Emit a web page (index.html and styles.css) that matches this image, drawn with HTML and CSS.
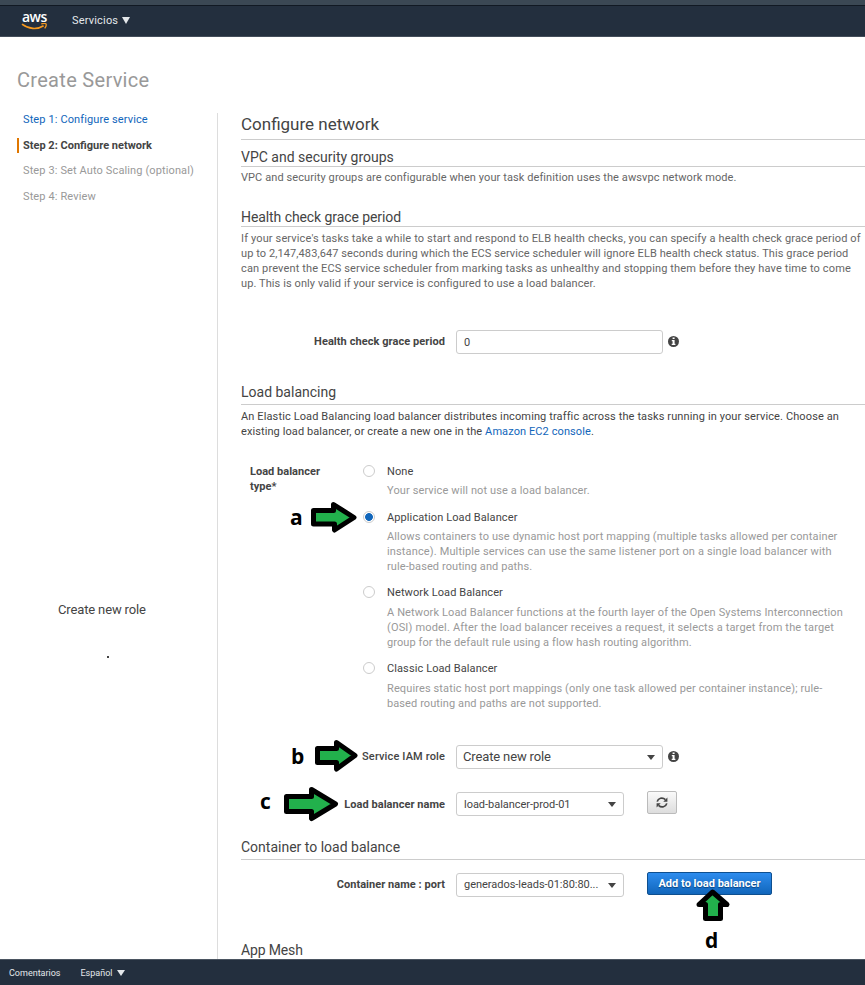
FILE: index.html
```html
<!DOCTYPE html>
<html lang="es">
<head>
<meta charset="utf-8">
<title>Create Service</title>
<link rel="stylesheet" href="styles.css">
</head>
<body>
<header class="topbar">
  <div class="logo">
    <span class="logo-text">aws</span>
    <svg class="logo-smile" width="28" height="8" viewBox="0 0 28 8"><path d="M1 1.200C7.500 6.200 16 7 22.600 2.800" fill="none" stroke="#f79a1f" stroke-width="1.700"/><path d="M20.200.9C22.400.4 24.400.3 25 .9 25.500 1.800 24.700 4 23.700 5.300" fill="none" stroke="#f79a1f" stroke-width="1.300"/></svg>
  </div>
  <a class="nav-item">Servicios <i class="tri"></i></a>
</header>

<div class="page">
  <aside class="sidebar">
    <h1>Create Service</h1>
    <ol class="steps">
      <li class="done">Step 1: Configure service</li>
      <li class="current">Step 2: Configure network</li>
      <li>Step 3: Set Auto Scaling (optional)</li>
      <li>Step 4: Review</li>
    </ol>
    <div class="side-note">Create new role</div>
    <div class="side-dot"></div>
  </aside>

  <main class="content">
    <h2>Configure network</h2>

    <section class="vpc">
      <h3>VPC and security groups</h3>
      <p class="muted narrow">VPC and security groups are configurable when your task definition uses the awsvpc network mode.</p>
    </section>

    <section class="health">
      <h3 class="tight">Health check grace period</h3>
      <p class="muted"><span class="wide">If your service's tasks take a while to start and respond to ELB health checks, you can specify a health check grace period of</span><br><span class="narrow">up to 2,147,483,647 seconds during which the ECS service scheduler will ignore ELB health check status. This grace period</span><br><span class="wide">can prevent the ECS service scheduler from marking tasks as unhealthy and stopping them before they have time to come</span><br><span class="narrow">up. This is only valid if your service is configured to use a load balancer.</span></p>
      <div class="row">
        <label class="grace">Health check grace period</label>
        <div class="field long">0</div>
        <svg class="info" width="11" height="11" viewBox="0 0 11 11"><circle cx="5.500" cy="5.500" r="5.500" fill="#444"/><path d="M4.600 1.500h2v1.600h-2zM3.800 4h2.800v3.800h.8V9H3.700V7.800h.9V5.200h-.8z" fill="#fff"/></svg>
      </div>
    </section>

    <section class="balancing">
      <h3 class="tall">Load balancing</h3>
      <p>An Elastic Load Balancing load balancer distributes incoming traffic across the tasks running in your service. Choose an<br><span class="narrow">existing load balancer, or create a new one in the <a>Amazon EC2 console</a>.</span></p>
      <div class="types">
        <label class="types-label">Load balancer<br>type*</label>
        <div class="options">
          <div class="option"><i class="radio"></i><div><b>None</b><p>Your service will not use a load balancer.</p></div></div>
          <div class="option"><i class="radio on"></i><div><b>Application Load Balancer</b><p>Allows containers to use dynamic host port mapping (multiple tasks allowed per container<br><span class="wide">instance). Multiple services can use the same listener port on a single load balancer with</span><br><span class="narrow">rule-based routing and paths.</span></p></div></div>
          <div class="option"><i class="radio"></i><div><b>Network Load Balancer</b><p><span>A Network Load Balancer functions at the fourth layer of the Open Systems Interconnection</span><br><span class="wider">(OSI) model. After the load balancer receives a request, it selects a target from the target</span><br><span class="narrow">group for the default rule using a flow hash routing algorithm.</span></p></div></div>
          <div class="option"><i class="radio"></i><div><b>Classic Load Balancer</b><p><span>Requires static host port mappings (only one task allowed per container instance); rule-</span><br><span class="narrow">based routing and paths are not supported.</span></p></div></div>
        </div>
      </div>
      <div class="row role">
        <label class="medium">Service IAM role</label>
        <div class="field long big">Create new role<i class="caret"></i></div>
        <svg class="info" width="11" height="11" viewBox="0 0 11 11"><circle cx="5.500" cy="5.500" r="5.500" fill="#444"/><path d="M4.600 1.500h2v1.600h-2zM3.800 4h2.800v3.800h.8V9H3.700V7.800h.9V5.200h-.8z" fill="#fff"/></svg>
      </div>
      <div class="row name">
        <label>Load balancer name</label>
        <div class="field short">load-balancer-prod-01<i class="caret"></i></div>
        <button class="refresh" aria-label="Refresh"><svg width="12" height="11" viewBox="0 0 12 11"><g fill="none" stroke="#444" stroke-width="1.700"><path d="M1.200 4.600C2 1.200 6.500-.2 9.400 2.700"/><path d="M10.800 6.400C10 9.800 5.500 11.200 2.600 8.300"/></g><path d="M11.400.6v4.100H7.300zM.6 10.400V6.300h4.100z" fill="#444"/></svg></button>
      </div>
    </section>

    <section class="container">
      <h3 class="tall">Container to load balance</h3>
      <div class="row port">
        <label>Container name : port</label>
        <div class="field short upper">generados-leads-01:80:80...<i class="caret"></i></div>
        <button class="primary">Add to load balancer</button>
      </div>
    </section>

    <section class="mesh"><h3 class="tall mesh-title">App Mesh</h3></section>
  </main>
</div>

<footer class="bottombar">
  <a>Comentarios</a>
  <a class="language">Español <i class="tri"></i></a>
</footer>

<div class="marks">
  <svg width="865" height="985" viewBox="0 0 865 985" fill="#22b14c" stroke="#000" stroke-width="5" stroke-linejoin="round">
    <path d="M313.500 510.500h20v-6L354 517.500 334.500 530v-6h-21z"/>
    <path d="M317.500 748.500h19v-6L355 755.500 336.500 769v-6.500h-19z"/>
    <path d="M286.500 796.500h25v-7L335.500 804 311.500 818.500v-7h-25z"/>
    <path d="M712.500 892L727 904.500h-6.500v14h-15v-14h-6.500z"/>
  </svg>
  <span class="mark a">a</span>
  <span class="mark b">b</span>
  <span class="mark c">c</span>
  <span class="mark d">d</span>
</div>
</body>
</html>
```

FILE: styles.css
```css
* { box-sizing: border-box; }
body {
  margin: 0;
  height: 985px;
  overflow: hidden;
  position: relative;
  display: flex;
  flex-direction: column;
  background: #fff;
  color: #444;
  font: 11px/15px Roboto, "Liberation Sans", sans-serif;
  letter-spacing: .12px;
}
h1, h2, h3, p, ol { margin: 0; padding: 0; font-weight: 400; }

/* Bars */
.topbar {
  flex: none;
  height: 37px;
  padding-top: 1px;
  display: flex;
  background: #232f3e;
  border-top: 5px solid #3b4854;
  border-bottom: 1px solid #434d5a;
  box-shadow: inset 0 1px 0 #111923;
  color: #e4e8eb;
}
.logo { width: 51px; margin-left: 21px; padding-top: 1px; display: flex; flex-direction: column; }
.logo-text { height: 15px; font: 600 14px/20px "Open Sans", sans-serif; letter-spacing: -.5px; padding-left: 1px; color: #fff; }
.logo-smile { margin-top: 1px; }
.nav-item { display: flex; align-items: center; height: 28px; letter-spacing: .18px; }
.tri { border: 4.500px solid transparent; border-top: 7px solid #e4e8eb; border-bottom: 0; margin-left: 4px; }
.bottombar {
  flex: none;
  height: 26px;
  padding-left: 9px;
  display: flex;
  align-items: center;
  background: #232f3e;
  border-top: 1px solid #4b5561;
  color: #e4e8eb;
  font-size: 9px;
  letter-spacing: 0;
}
.bottombar a { padding-top: 1px; }
.language { display: flex; align-items: center; margin-left: 20px; }
.bottombar .tri { border-width: 6px 4px 0; }

/* Page columns */
.page { flex: 1; min-height: 0; display: flex; overflow: hidden; }
.sidebar { width: 217px; flex: none; padding-top: 31px; }
.sidebar h1 { margin-left: 17px; font-size: 20px; line-height: 24px; letter-spacing: .3px; color: #999; }
.steps { list-style: none; margin: 20px 0 0 17px; }
.steps li { height: 15px; margin-bottom: 10.670px; padding-left: 6px; line-height: 15px; color: #999; }
.steps .done { color: #1166bb; }
.steps .current { padding-left: 4px; border-left: 2px solid #e07700; font-weight: 700; letter-spacing: 0; color: #444; }
.side-note { margin: 396px 0 0 58px; font-size: 13px; line-height: 20px; letter-spacing: -.14px; }
.side-dot { width: 2px; height: 2px; margin: 36px 0 0 107px; background: #444; }
.content {
  flex: 1;
  margin-top: 76px;
  padding-left: 23px;
  border-left: 1px solid #ddd;
}
h2 { height: 27px; font-size: 17px; line-height: 22px; letter-spacing: 0; border-bottom: 1px solid #ccc; }
h3 { height: 20px; font-size: 14px; line-height: 20px; letter-spacing: 0; border-bottom: 1px solid #ccc; }
h3.tight { letter-spacing: -.08px; }
h3.tall { height: 24px; line-height: 22px; }
.wide { letter-spacing: .14px; }
.wider { letter-spacing: .17px; }
.narrow { letter-spacing: .09px; }
.muted { color: #666; }
.content p { white-space: nowrap; }
a { color: inherit; }
.content a { color: #1166bb; }

.vpc { height: 67px; padding-top: 7px; }
.vpc p { margin-top: 3px; }
.health { height: 174px; }
.health p { margin-top: 4px; }
.health .row { margin-top: 39px; }
.balancing { height: 455px; }
.balancing > p { margin-top: 4px; }
.container { height: 103px; }
h3.mesh-title { border: 0; letter-spacing: -.15px; }

/* Form rows */
.row { display: flex; align-items: center; height: 24px; }
.row label { width: 204px; margin-right: 11px; padding-bottom: 2px; text-align: right; font-weight: 700; letter-spacing: .04px; white-space: nowrap; }
.row.name label { padding-bottom: 0; }
.row label.grace { letter-spacing: .07px; }
.row label.medium { font-weight: 500; letter-spacing: .14px; }
.field {
  position: relative;
  height: 24px;
  padding-left: 7px;
  border: 1px solid #ccc;
  border-radius: 3px;
  line-height: 24px;
  letter-spacing: -.03px;
  white-space: nowrap;
}
.upper { line-height: 22px; }
.long { width: 207px; }
.short { width: 168px; }
.big { padding-left: 6px; font-size: 13px; line-height: 22px; letter-spacing: -.14px; }
.caret { position: absolute; right: 7px; top: 9px; border: 4.500px solid transparent; border-top: 5px solid #444; border-bottom: 0; }
.info { margin: -2px 0 0 5px; }
.refresh {
  width: 30px;
  height: 23px;
  margin: -3px 0 0 23px;
  padding: 0;
  display: flex;
  align-items: center;
  justify-content: center;
  border: 1px solid #bbb;
  border-radius: 2px;
  background: linear-gradient(#fafafa, #ddd);
}
.primary {
  width: 125px;
  height: 23px;
  margin: -3px 0 0 23px;
  padding: 0;
  border: 1px solid #0e4f8f;
  border-radius: 2px;
  background: linear-gradient(#2d8cee, #1166bb);
  color: #fff;
  font: 700 11px/20px Roboto, sans-serif;
  letter-spacing: .02px;
  text-shadow: 0 1px 1px #0a4480;
}

/* Load balancer types */
.types { display: flex; margin-top: 25px; height: 281px; }
.types-label { width: 122px; padding-left: 9px; font-weight: 700; letter-spacing: .02px; }
.option { display: flex; height: 46px; }
.option:nth-child(2) { height: 75px; }
.option:nth-child(3) { height: 76px; }
.option b { display: block; height: 19px; font-weight: 400; letter-spacing: .1px; }
.option:nth-child(n+3) b { height: 20px; }
.option p { color: #999; }
.radio { flex: none; width: 12px; height: 12px; margin: 1px 12px 0 0; border: 1px solid #ccc; border-radius: 50%; }
.radio.on { background: radial-gradient(circle, #1166bb 3.500px, #fff 4.300px); }
.name { margin-top: 23px; }
.port { margin-top: 13px; }

/* Annotations drawn over the form */
.marks { position: absolute; inset: 0; pointer-events: none; }
.marks svg { display: block; }
.mark { position: absolute; color: #000; font: 700 21px/24px "Open Sans", sans-serif; letter-spacing: 0; }
.a { left: 290px; top: 505px; }
.b { left: 291px; top: 744px; }
.c { left: 260px; top: 789px; }
.d { left: 705px; top: 928px; }
```
